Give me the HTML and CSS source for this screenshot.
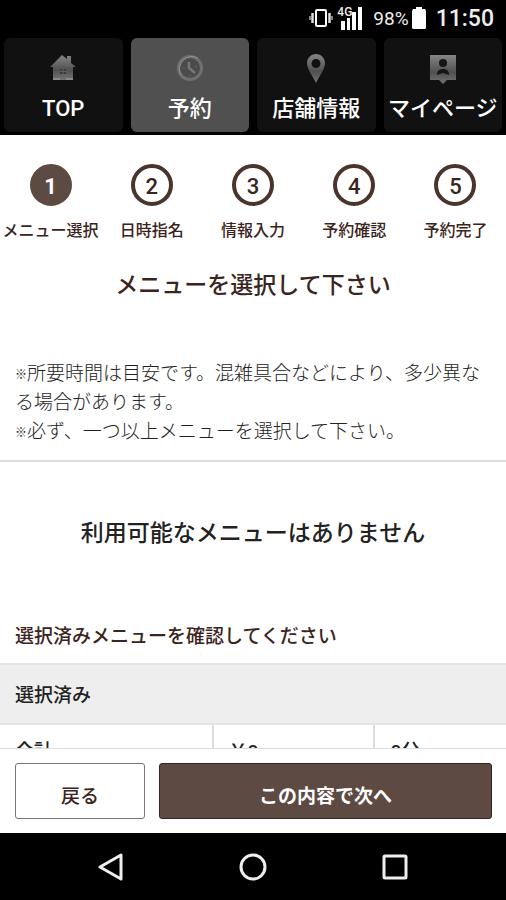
FILE: index.html
```html
<!DOCTYPE html>
<html lang="ja">
<head>
    <meta charset="UTF-8">
    <meta name="viewport" content="width=device-width, initial-scale=1.0">
    <title>予約</title>
    <link rel="stylesheet" href="styles.css">
</head>
<body>
    <!-- ステータスバー -->
    <div class="status-bar">
        <svg width="24" height="20" viewBox="0 0 24 20" aria-hidden="true">
            <rect x="7" y="2" width="10" height="16" rx="1" fill="none" stroke="#fff" stroke-width="2"/>
            <path d="M3.500 5v10M20.500 5v10" stroke="#ddd" stroke-width="2.500"/>
            <path d="M1 8v4M23 8v4" stroke="#aaa" stroke-width="1.500"/>
        </svg>
        <div class="signal">
            <svg width="26" height="24" viewBox="0 0 26 24" aria-hidden="true">
                <path fill="#fff" d="M4 15h4v9H4zM10 12h3v12h-3zM15 6h4v18h-4zM21 1h4v23h-4z"/>
            </svg>
            <span class="signal-label">4G</span>
        </div>
        <span class="battery-text">98%</span>
        <svg class="battery" width="14" height="22" viewBox="0 0 14 22" aria-hidden="true">
            <path fill="#fff" d="M4 0h6v2h3l1 2v17l-1 1H1l-1-1V4l1-2h3z"/>
        </svg>
        <span class="clock">11:50</span>
    </div>

    <nav class="tabs">
        <a class="tab" href="#">
            <svg width="26" height="28" viewBox="0 0 26 28" aria-hidden="true">
                <defs>
                    <linearGradient id="metal" x1="0" y1="0" x2="0" y2="1">
                        <stop offset="0" stop-color="#858585"/>
                        <stop offset="0.600" stop-color="#505050"/>
                        <stop offset="1" stop-color="#747474"/>
                    </linearGradient>
                </defs>
                <path fill="url(#metal)" d="M0 13 12 1l5 4V2h4v7l5 4h-3v13H3V13z"/>
                <path fill="#3c3c3c" d="M10 15h6v5h-6z"/>
                <path stroke="#606060" d="M13 15v5M10 17.500h6"/>
                <path fill="#8a8a8a" d="M3 24h7v2H3zM16 24h7v2h-7z"/>
            </svg>
            <span>TOP</span>
        </a>
        <a class="tab active" href="#">
            <svg width="28" height="28" viewBox="0 0 28 28" aria-hidden="true">
                <circle cx="14" cy="14" r="11.500" fill="#4b4b4b" stroke="#707070" stroke-width="3"/>
                <path d="M5 21A12.500 12.500 0 0 1 22 4" fill="none" stroke="#909090"/>
                <path d="M13 8v6l6 5" fill="none" stroke="#777" stroke-width="2.500"/>
                <path d="M7 14h2M19 13h2M14 21v2" stroke="#666"/>
            </svg>
            <span>予約</span>
        </a>
        <a class="tab" href="#">
            <svg width="20" height="30" viewBox="0 0 20 30" aria-hidden="true">
                <path fill="url(#metal)" fill-rule="evenodd" d="M10 0c5 0 9 4 9 9 0 6-5 12-9 20C6 21 1 15 1 9c0-5 4-9 9-9zm0 5a4 4 0 1 0 0 9 4 4 0 0 0 0-9z"/>
            </svg>
            <span>店舗情報</span>
        </a>
        <a class="tab" href="#">
            <svg width="26" height="30" viewBox="0 0 26 30" aria-hidden="true">
                <path fill="url(#metal)" d="M0 1h26v25h-9l-4 4-4-4H0z"/>
                <circle cx="13" cy="9" r="4" fill="#161616"/>
                <path fill="#161616" d="M7 21c0-4 2-6 6-6s6 2 6 6l-6-2z"/>
            </svg>
            <span>マイページ</span>
        </a>
    </nav>

    <main class="content">
        <ol class="steps">
            <li class="step current"><span class="step-number">1</span>メニュー選択</li>
            <li class="step"><span class="step-number">2</span>日時指名</li>
            <li class="step"><span class="step-number">3</span>情報入力</li>
            <li class="step"><span class="step-number">4</span>予約確認</li>
            <li class="step"><span class="step-number">5</span>予約完了</li>
        </ol>

        <h1 class="title">メニューを選択して下さい</h1>

        <p class="note"><span class="mark">※</span>所要時間は目安です。混雑具合などにより、多少異なる場合があります。<br><span class="mark">※</span>必ず、一つ以上メニューを選択して下さい。</p>

        <p class="empty">利用可能なメニューはありません</p>

        <h2 class="confirm">選択済みメニューを確認してください</h2>
        <table class="selected">
            <colgroup>
                <col class="col-name">
                <col class="col-price">
                <col>
            </colgroup>
            <thead>
                <tr><th colspan="3">選択済み</th></tr>
            </thead>
            <tbody>
                <tr>
                    <td>合計</td>
                    <td>￥0</td>
                    <td>0分</td>
                </tr>
            </tbody>
        </table>
    </main>

    <div class="actions">
        <button class="back" type="button">戻る</button>
        <button class="next" type="button">この内容で次へ</button>
    </div>

    <!-- 端末のナビゲーションバー -->
    <div class="system-nav">
        <button type="button" aria-label="戻る">
            <svg width="28" height="28" viewBox="0 0 28 28"><path d="M3 14 24 2v24z" fill="none" stroke="#eee" stroke-width="3" stroke-linejoin="round"/></svg>
        </button>
        <button type="button" aria-label="ホーム">
            <svg width="28" height="28" viewBox="0 0 28 28"><circle cx="14" cy="14" r="12" fill="none" stroke="#eee" stroke-width="3"/></svg>
        </button>
        <button type="button" aria-label="履歴">
            <svg width="28" height="28" viewBox="0 0 28 28"><rect x="3" y="3" width="22" height="22" rx="1" fill="none" stroke="#eee" stroke-width="3"/></svg>
        </button>
    </div>
</body>
</html>
```

FILE: styles.css
```css
* {
    box-sizing: border-box;
}
body {
    margin: 0;
    height: 100vh;
    display: flex;
    flex-direction: column;
    font-family: Roboto, "Noto Sans CJK JP", sans-serif;
    font-size: 19px;
    font-weight: 500;
    color: #222;
    background-color: #fff;
}

/* ステータスバー */
.status-bar {
    display: flex;
    align-items: center;
    justify-content: flex-end;
    height: 38px;
    padding: 0 12px 2px;
    background-color: #000;
    color: #eee;
}
.signal {
    position: relative;
    height: 24px;
    margin: 0 10px 0 4px;
}
.signal-label {
    position: absolute;
    top: 0;
    left: 0;
    font-size: 12px;
    line-height: 12px;
}
.battery-text {
    font-size: 19px;
    font-weight: 400;
}
.battery {
    margin: 0 10px 0 3px;
}
.clock {
    font-size: 23px;
}

/* タブ */
.tabs {
    display: grid;
    grid-template-columns: repeat(4, 1fr);
    gap: 8px;
    padding: 0 4px 3px;
    background-color: #000;
}
.tab {
    display: flex;
    flex-direction: column;
    align-items: center;
    justify-content: space-between;
    height: 94px;
    padding: 16px 0 7px;
    border-radius: 6px;
    background-color: #111;
    color: #fff;
    font-size: 22px;
    line-height: 32px;
    white-space: nowrap;
    text-decoration: none;
}
.tab.active {
    background-color: #505050;
}

.content {
    flex: 1;
    min-height: 0;
    overflow-y: auto;
    scrollbar-width: none;
}

/* 予約の手順 */
.steps {
    display: grid;
    grid-template-columns: repeat(5, 1fr);
    margin: 0;
    padding: 29px 0 0;
    list-style: none;
}
.step {
    display: flex;
    flex-direction: column;
    align-items: center;
    gap: 13px;
    font-size: 16px;
    line-height: 24px;
    color: #3b2420;
    white-space: nowrap;
}
.step-number {
    width: 42px;
    height: 42px;
    padding-top: 2px;
    border: 4px solid #4b342e;
    border-radius: 50%;
    font-size: 22px;
    line-height: 34px;
    text-align: center;
}
.current .step-number {
    border-color: #5d4a43;
    background-color: #5d4a43;
    color: #fff;
    font-weight: 700;
}

.title {
    margin: 27px 0 57px;
    font-size: 23px;
    font-weight: 500;
    line-height: 32px;
    text-align: center;
    color: #3b2420;
}
.note {
    margin: 0;
    padding: 0 15px 14px;
    border-bottom: 2px solid #ddd;
    font-weight: 300;
    line-height: 29px;
}
.mark {
    font-size: 12px;
    line-height: 12px;
    vertical-align: 1px;
}
.empty {
    margin: 56px 0 72px;
    font-size: 23px;
    line-height: 32px;
    text-align: center;
}
.confirm {
    margin: 0;
    padding: 0 15px 12px;
    font-size: 19px;
    font-weight: 500;
    line-height: 29px;
    color: #3b2420;
}

/* 選択済みメニュー */
.selected {
    width: 100%;
    table-layout: fixed;
    border-collapse: collapse;
}
.selected th {
    height: 60px;
    padding: 0 15px 2px;
    border-top: 2px solid #e4e4e4;
    border-bottom: 2px solid #e4e4e4;
    background-color: #eee;
    font-weight: 500;
    text-align: left;
}
.selected td {
    height: 54px;
    padding: 0 15px;
    border-right: 2px solid #ddd;
    line-height: 29px;
}
.selected td:last-child {
    border-right: none;
}
.col-name {
    width: 42%;
}
.col-price {
    width: 32%;
}

/* 下部のボタン */
.actions {
    display: flex;
    gap: 14px;
    padding: 14px 14px 14px 15px;
    border-top: 1px solid #ddd;
}
.actions button {
    height: 56px;
    padding: 6px 0 0;
    border-radius: 3px;
    font-family: inherit;
    font-size: 19px;
    font-weight: 500;
    cursor: pointer;
}
.actions .back {
    flex: 39;
    border: 1px solid #777;
    background-color: #fff;
    color: #3b2420;
}
.actions .next {
    flex: 101;
    border: 1px solid #3b2420;
    background-color: #5d4a43;
    color: #fff;
    font-weight: 700;
}

.system-nav {
    display: grid;
    grid-template-columns: repeat(3, 28%);
    justify-content: center;
    height: 67px;
    background-color: #000;
}
.system-nav button {
    padding: 0;
    border: none;
    background: none;
}
.system-nav svg {
    display: block;
    margin: 0 auto;
}
```
